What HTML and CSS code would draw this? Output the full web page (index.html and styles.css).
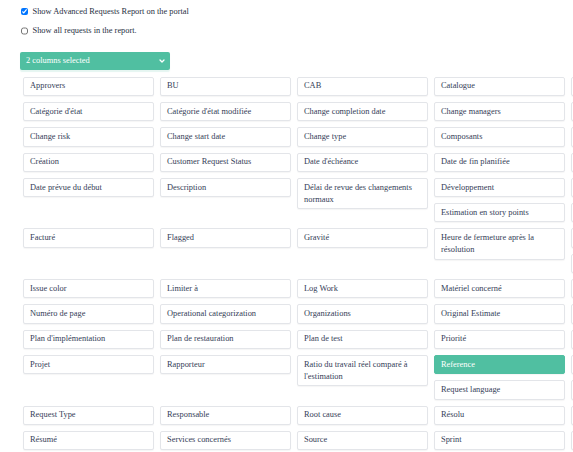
FILE: index.html
```html
<!DOCTYPE html>
<html lang="fr">
<head>
  <meta charset="UTF-8" />
  <meta name="viewport" content="width=device-width, initial-scale=1.0"/>
  <title>Advanced Requests Report</title>
  <link rel="stylesheet" href="styles.css">
</head>
<body>
  <div class="page">
    <label class="option">
      <input type="checkbox" checked>
      <span>Show Advanced Requests Report on the portal</span>
    </label>
    <label class="option">
      <input type="checkbox">
      <span>Show all requests in the report.</span>
    </label>

    <button class="dropdown">
      <span>2 columns selected</span>
      <svg width="6" height="4" viewBox="0 0 6 4"><path d="M1 1 L3 3 L5 1" fill="none" stroke="#fff" stroke-width="1.3" stroke-linecap="round" stroke-linejoin="round"/></svg>
    </button>

    <!-- the list is wider than the window: the fifth column is cut at the edge -->
    <div class="columns">
      <div class="column-list">
        <div class="col">Approvers</div>
        <div class="col">BU</div>
        <div class="col">CAB</div>
        <div class="col">Catalogue</div>
        <div class="col"></div>

        <div class="col">Catégorie d'état</div>
        <div class="col">Catégorie d'état modifiée</div>
        <div class="col">Change completion date</div>
        <div class="col">Change managers</div>
        <div class="col"></div>

        <div class="col">Change risk</div>
        <div class="col">Change start date</div>
        <div class="col">Change type</div>
        <div class="col">Composants</div>
        <div class="col"></div>

        <div class="col">Création</div>
        <div class="col">Customer Request Status</div>
        <div class="col">Date d'échéance</div>
        <div class="col">Date de fin planifiée</div>
        <div class="col"></div>

        <div class="col">Date prévue du début</div>
        <div class="col">Description</div>
        <div class="col">Délai de revue des changements normaux</div>
        <div class="col">Développement</div>
        <div class="col"></div>
        <div class="col">Estimation en story points</div>
        <div class="col"></div>

        <div class="col">Facturé</div>
        <div class="col">Flagged</div>
        <div class="col">Gravité</div>
        <div class="col">Heure de fermeture après la résolution</div>
        <div class="col"></div>
        <div class="col"></div>

        <div class="col">Issue color</div>
        <div class="col">Limiter à</div>
        <div class="col">Log Work</div>
        <div class="col">Matériel concerné</div>
        <div class="col"></div>

        <div class="col">Numéro de page</div>
        <div class="col">Operational categorization</div>
        <div class="col">Organizations</div>
        <div class="col">Original Estimate</div>
        <div class="col"></div>

        <div class="col">Plan d'implémentation</div>
        <div class="col">Plan de restauration</div>
        <div class="col">Plan de test</div>
        <div class="col">Priorité</div>
        <div class="col"></div>

        <div class="col">Projet</div>
        <div class="col">Rapporteur</div>
        <div class="col">Ratio du travail réel comparé à l'estimation</div>
        <div class="col selected">Reference</div>
        <div class="col"></div>
        <div class="col">Request language</div>
        <div class="col"></div>

        <div class="col">Request Type</div>
        <div class="col">Responsable</div>
        <div class="col">Root cause</div>
        <div class="col">Résolu</div>
        <div class="col"></div>

        <div class="col">Résumé</div>
        <div class="col">Services concernés</div>
        <div class="col">Source</div>
        <div class="col">Sprint</div>
        <div class="col"></div>
      </div>
    </div>
  </div>
</body>
</html>
```

FILE: styles.css
```css
html, body {
  margin: 0;
  background: #ffffff;
  overflow: hidden;
}

body {
  font-family: 'Liberation Serif', 'Times New Roman', serif;
  font-size: 8.4px;
  color: #27303f;
}

.page {
  padding: 5.7px 0 0 20px;
}

.option {
  display: flex;
  align-items: center;
  height: 12px;
  margin-bottom: 7.3px;
}

.option input {
  width: 7.5px;
  height: 7.5px;
  margin: 0 4.5px 0 0.5px;
}

.dropdown {
  display: flex;
  align-items: center;
  justify-content: space-between;
  width: 150px;
  height: 17.4px;
  margin-top: 15.3px;
  padding: 0 5px 0 6px;
  background-color: #50bfa1;
  color: white;
  font-family: inherit;
  font-size: 8.4px;
  border: none;
  border-radius: 2px;
  box-shadow: 0 1.5px 1px rgba(80, 191, 161, 0.15);
  box-sizing: border-box;
}

.columns {
  width: 100%;
  overflow: hidden;
  margin-top: 7px;
}

.column-list {
  width: 685px;
  display: flow-root;
}

.col {
  float: left;
  width: 131px;
  min-height: 19.3px;
  box-sizing: border-box;
  margin: 0 3px 6px 3px;
  padding: 2.65px 6px;
  line-height: 12px;
  border: 1px solid #e3e5e9;
  border-radius: 2px;
  box-shadow: 0 1px 1px rgba(0, 0, 0, 0.04);
  color: #344057;
  background: white;
}

.col.selected {
  background-color: #50bfa1;
  border-color: #50bfa1;
  color: white;
}
```
